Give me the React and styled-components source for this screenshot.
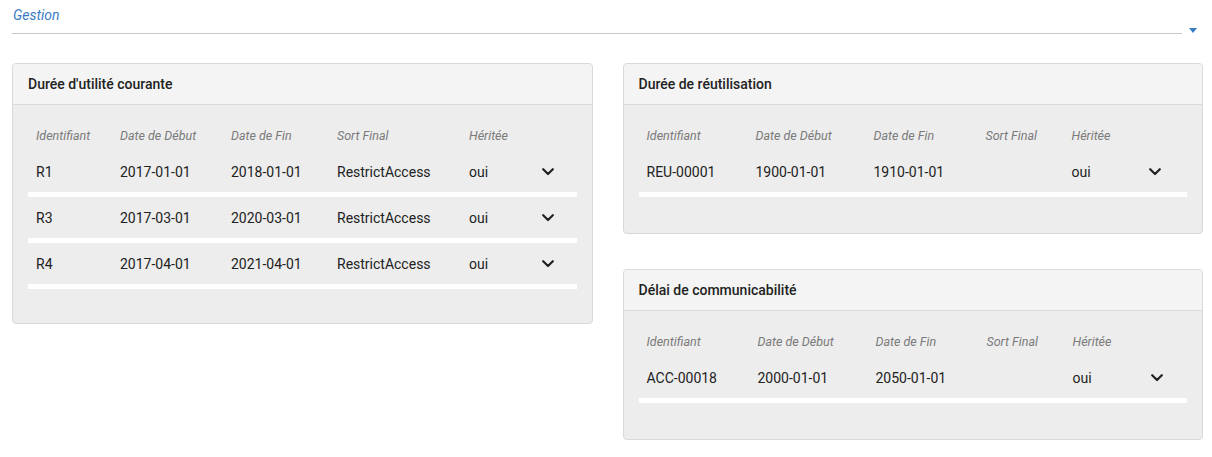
import styled, { createGlobalStyle } from "styled-components";

const GlobalStyle = createGlobalStyle`
  body {
    margin: 0;
    background: #ffffff;
    font-family: Roboto, "Liberation Sans", sans-serif;
    color: #222;
  }
`;

const Page = styled.div`
  padding: 0 9px 20px 12px;
`;

const Field = styled.div`
  display: flex;
  align-items: flex-end;
  gap: 7px;
  height: 34px;
  margin-bottom: 29px;
`;

const FieldInput = styled.div`
  flex: 1;
  height: 33px;
  border-bottom: 1px solid #c8c8c8;
  box-sizing: border-box;
  font-style: italic;
  font-size: 14px;
  color: #3a7cc4;
  padding: 6px 0 0 1px;
`;

const Caret = styled.span`
  width: 0;
  height: 0;
  border-left: 4px solid transparent;
  border-right: 4px solid transparent;
  border-top: 5px solid #3a7cc4;
  margin: 0 6px 1px 0;
`;

const Columns = styled.div`
  display: grid;
  grid-template-columns: 1fr 1fr;
  column-gap: 30px;
  align-items: start;
`;

const Stack = styled.div`
  display: flex;
  flex-direction: column;
  gap: 35px;
`;

const Card = styled.section`
  border: 1px solid #d9d9d9;
  border-radius: 4px;
  background: #ededed;
  overflow: hidden;
`;

const CardHeader = styled.header`
  height: 40px;
  display: flex;
  align-items: center;
  padding: 0 15px;
  background: #f4f4f4;
  border-bottom: 1px solid #dadada;
  font-weight: 500;
  font-size: 14px;
  color: #222;
`;

const CardBody = styled.div`
  padding: 15px 15px ${(p) => p.$bottom}px;
`;

const Row = styled.div`
  display: grid;
  grid-template-columns: ${(p) => p.$cols};
  align-items: center;
  height: ${(p) => (p.$head ? "31px" : "41px")};
  border-bottom: ${(p) => (p.$head ? "none" : "5px solid #ffffff")};
`;

const Label = styled.span`
  padding-left: 8px;
  font-style: italic;
  font-size: 12.5px;
  color: #7a7a7a;
  white-space: nowrap;
`;

const Value = styled.span`
  padding-left: 8px;
  font-size: 14px;
  color: #222;
  white-space: nowrap;
`;

const Toggle = styled.span`
  padding-left: 8px;
  display: flex;
  align-items: center;
`;

const Chevron = () => (
  <svg width="12" height="8" viewBox="0 0 12 8">
    <polyline
      points="1.2,1.2 6,6 10.8,1.2"
      fill="none"
      stroke="#222"
      strokeWidth="2.2"
      strokeLinecap="round"
      strokeLinejoin="round"
    />
  </svg>
);

const headers = ["Identifiant", "Date de Début", "Date de Fin", "Sort Final", "Héritée"];

const RuleCard = ({ title, cols, rows, bottom = 34 }) => (
  <Card>
    <CardHeader>{title}</CardHeader>
    <CardBody $bottom={bottom}>
      <Row $head $cols={cols}>
        {headers.map((h) => (
          <Label key={h}>{h}</Label>
        ))}
        <span />
      </Row>
      {rows.map((r) => (
        <Row key={r[0]} $cols={cols}>
          {r.map((v, i) => (
            <Value key={i}>{v}</Value>
          ))}
          <Toggle>
            <Chevron />
          </Toggle>
        </Row>
      ))}
    </CardBody>
  </Card>
);

const App = () => (
  <>
    <GlobalStyle />
    <Page>
      <Field>
        <FieldInput>Gestion</FieldInput>
        <Caret />
      </Field>
      <Columns>
        <RuleCard
          title="Durée d'utilité courante"
          cols="84px 111px 106px 132px 73px 1fr"
          rows={[
            ["R1", "2017-01-01", "2018-01-01", "RestrictAccess", "oui"],
            ["R3", "2017-03-01", "2020-03-01", "RestrictAccess", "oui"],
            ["R4", "2017-04-01", "2021-04-01", "RestrictAccess", "oui"],
          ]}
        />
        <Stack>
          <RuleCard
            title="Durée de réutilisation"
            cols="109px 118px 112px 86px 77px 1fr"
            bottom={36}
            rows={[["REU-00001", "1900-01-01", "1910-01-01", "", "oui"]]}
          />
          <RuleCard
            title="Délai de communicabilité"
            cols="111px 118px 111px 86px 78px 1fr"
            bottom={36}
            rows={[["ACC-00018", "2000-01-01", "2050-01-01", "", "oui"]]}
          />
        </Stack>
      </Columns>
    </Page>
  </>
);

export default App;
